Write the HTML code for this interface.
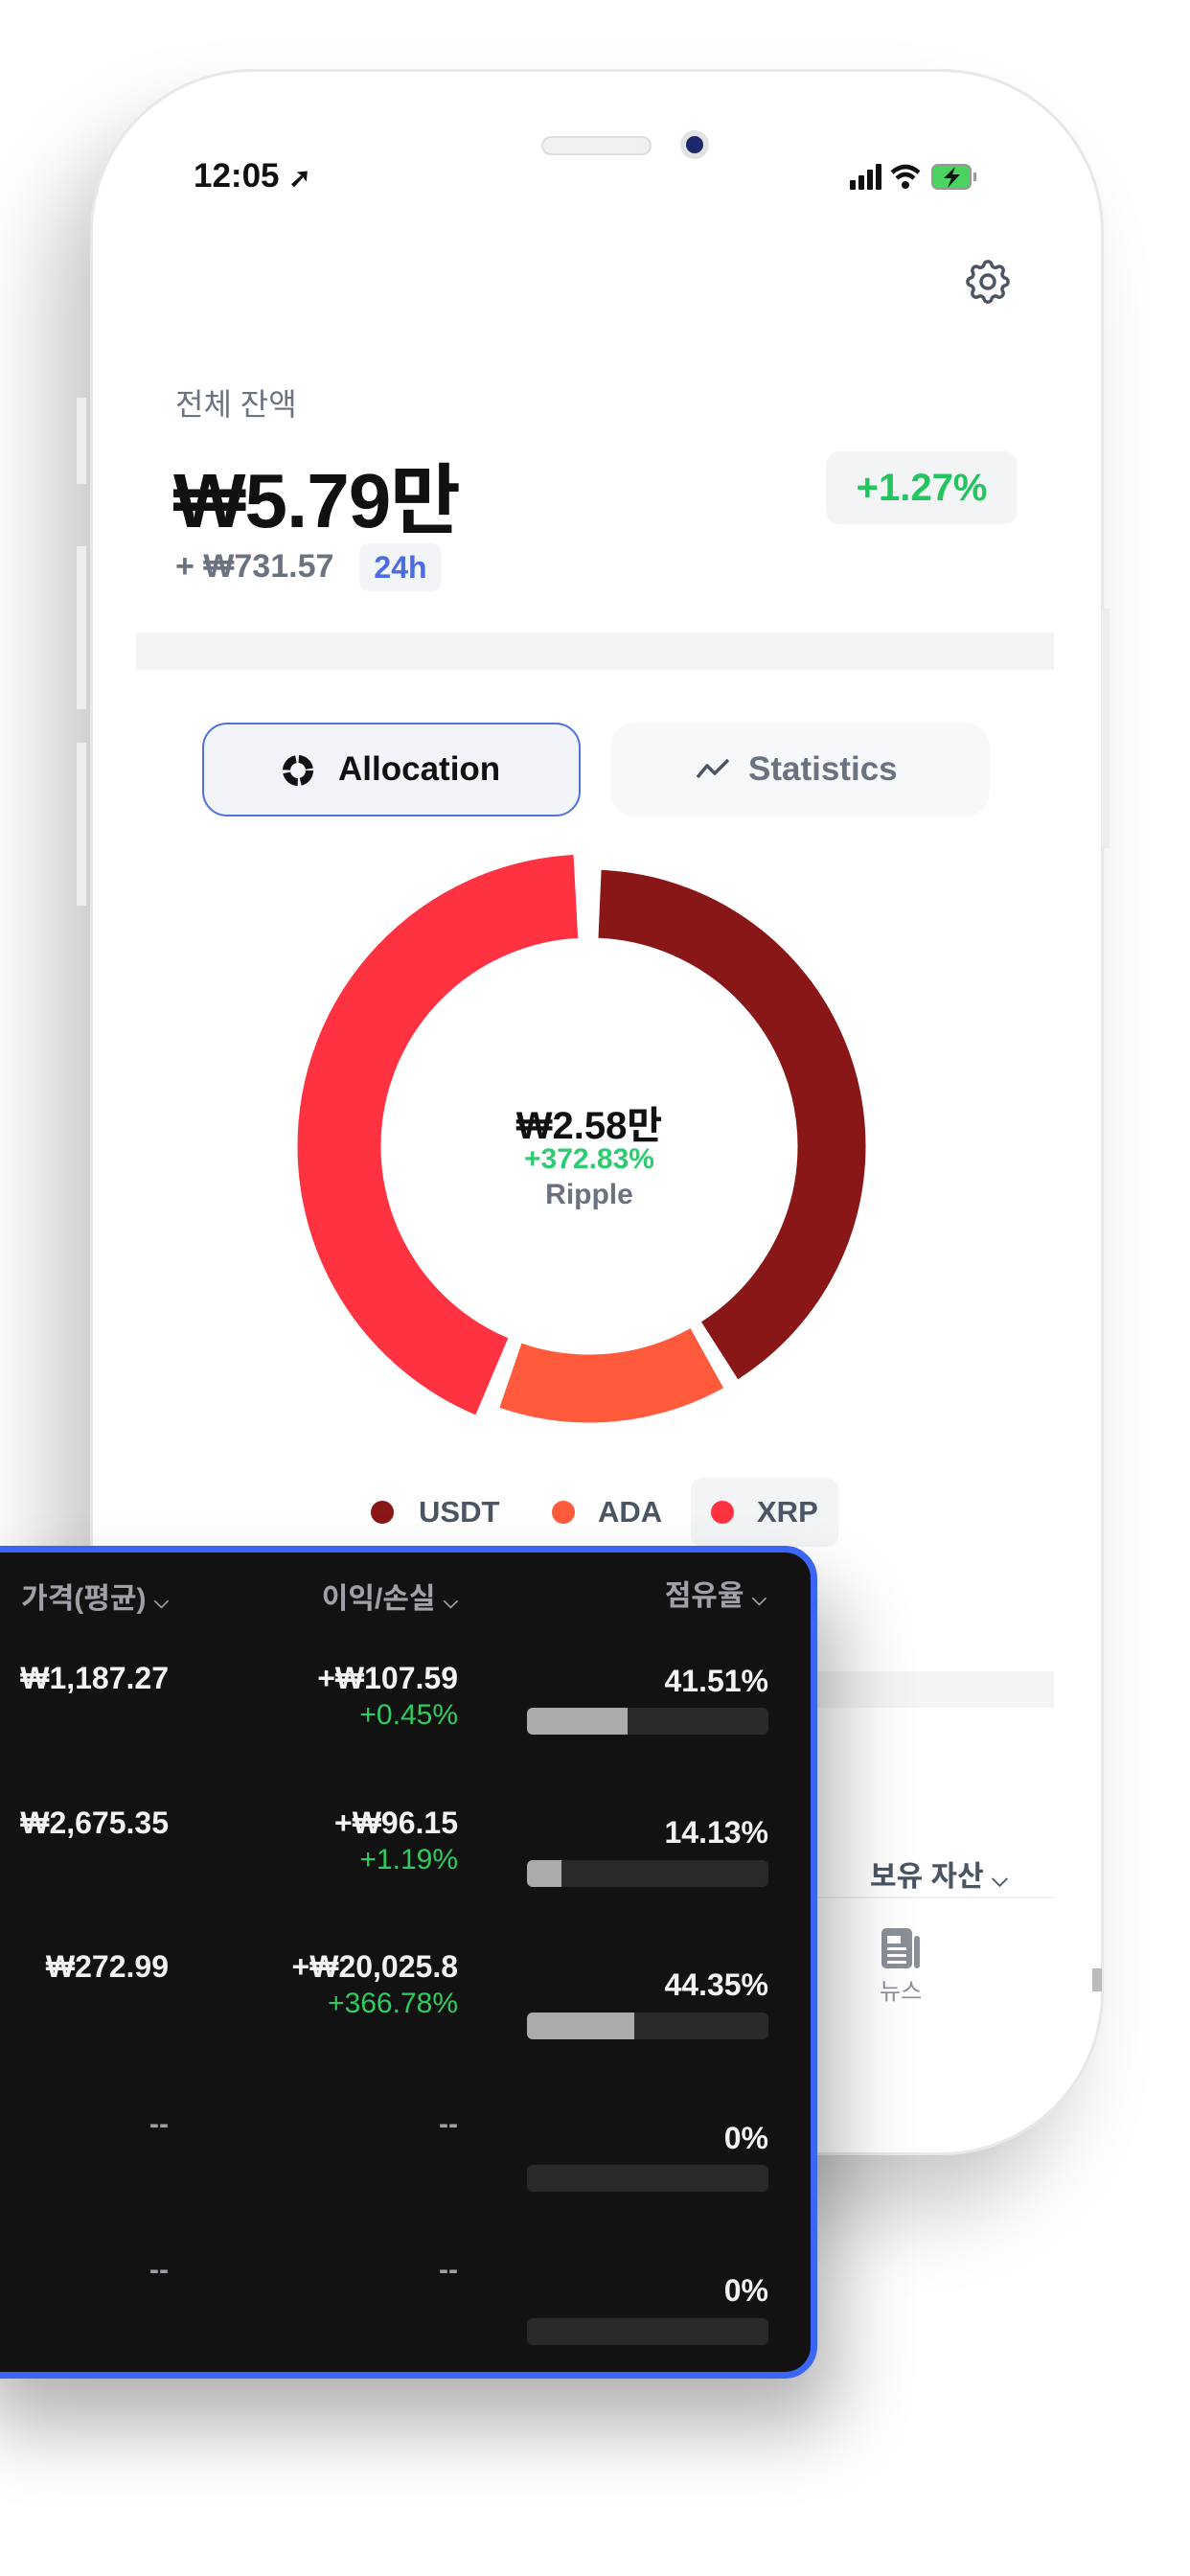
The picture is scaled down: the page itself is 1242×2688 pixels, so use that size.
<!DOCTYPE html>
<html><head><meta charset="utf-8"><style>
*{margin:0;padding:0;box-sizing:border-box}
body{width:1242px;height:2688px;background:#fff;position:relative;overflow:hidden;font-family:"Liberation Sans","Noto Sans CJK KR",sans-serif}
.a{position:absolute;white-space:nowrap}
.phone{position:absolute;left:94px;top:72px;width:1058px;height:2177px;border-radius:170px;background:#fff;border:3px solid #e8e8ea;box-shadow:-40px 60px 90px rgba(0,0,0,.22)}
.r{text-align:right}
.hd{color:#a0a0a8;font-size:30px;font-weight:600}
.w{color:#f2f2f2;font-size:32px;font-weight:600}
.g{color:#2ecc5e;font-size:30px}
.bar{position:absolute;left:550px;width:252px;height:28px;background:#2a2a2c;border-radius:6px;overflow:hidden}
.bar i{display:block;height:100%;background:#ababab}
</style></head><body>
<div class="phone"></div>
<div class="a" style="left:80px;top:415px;width:10px;height:90px;background:#eee"></div>
<div class="a" style="left:80px;top:570px;width:10px;height:170px;background:#eee"></div>
<div class="a" style="left:80px;top:775px;width:10px;height:170px;background:#eee"></div>
<div class="a" style="left:1150px;top:635px;width:8px;height:250px;background:#eee"></div>

<div class="a" style="left:202px;top:164px;font-size:35px;font-weight:600;color:#111">12:05 <span style="font-size:28px">➚</span></div>
<div class="a" style="left:565px;top:142px;width:115px;height:20px;border-radius:10px;background:#f0f0f0;border:2px solid #ddd"></div>
<div class="a" style="left:710px;top:136px;width:30px;height:30px;border-radius:50%;background:#1b2a6b;border:6px solid #e3e3e6"></div>
<svg class="a" style="left:885px;top:168px" width="175" height="34" viewBox="0 0 175 34">
<rect x="2" y="20" width="6" height="10" rx="1" fill="#111"/><rect x="11" y="15" width="6" height="15" rx="1" fill="#111"/><rect x="20" y="9" width="6" height="21" rx="1" fill="#111"/><rect x="29" y="3" width="6" height="27" rx="1" fill="#111"/>
<path d="M46 12 Q60 0 74 12" stroke="#111" stroke-width="4.5" fill="none"/><path d="M51 18 Q60 10 69 18" stroke="#111" stroke-width="4.5" fill="none"/><circle cx="60" cy="25" r="4" fill="#111"/>
<rect x="88" y="4" width="40" height="25" rx="6" fill="#4bd35f" stroke="#999" stroke-width="2"/><rect x="131" y="12" width="3" height="9" fill="#999"/>
<path d="M112 6 L100 18 H108 L104 28 L117 14 H109 Z" fill="#111"/>
</svg>
<svg class="a" style="left:1003px;top:266px" width="56" height="56" viewBox="0 0 24 24" fill="none" stroke="#4b5563" stroke-width="1.5"><path d="M10.3 4.3c.4-1.8 3-1.8 3.4 0a1.7 1.7 0 0 0 2.6 1.1c1.5-.9 3.3.8 2.4 2.4a1.7 1.7 0 0 0 1 2.5c1.8.4 1.8 3 0 3.4a1.7 1.7 0 0 0-1 2.6c.9 1.5-.9 3.3-2.4 2.4a1.7 1.7 0 0 0-2.6 1c-.4 1.8-3 1.8-3.4 0a1.7 1.7 0 0 0-2.6-1c-1.5.9-3.3-.9-2.4-2.4a1.7 1.7 0 0 0-1-2.6c-1.8-.4-1.8-3 0-3.4a1.7 1.7 0 0 0 1-2.5c-.9-1.6.9-3.3 2.4-2.4 1 .6 2.300.1 2.6-1.1z"/><circle cx="12" cy="12" r="3"/></svg>

<div class="a" style="left:183px;top:397px;font-size:32px;color:#6b7280">전체 잔액</div>
<div class="a" style="left:181px;top:458px;font-size:80px;font-weight:700;color:#111;letter-spacing:-1px">₩5.79만</div>
<div class="a" style="left:862px;top:471px;width:200px;height:76px;border-radius:14px;background:#f3f4f6;color:#22c55e;font-size:40px;font-weight:600;text-align:center;line-height:76px">+1.27%</div>
<div class="a" style="left:183px;top:572px;font-size:34px;color:#6b7280;font-weight:600">+ ₩731.57</div>
<div class="a" style="left:375px;top:567px;width:86px;height:50px;border-radius:10px;background:#f3f4f8;color:#4a6ce0;font-size:32px;font-weight:600;text-align:center;line-height:50px">24h</div>
<div class="a" style="left:142px;top:660px;width:958px;height:39px;background:#f3f4f6"></div>

<div class="a" style="left:211px;top:754px;width:395px;height:98px;border-radius:26px;border:2px solid #4f73db;background:#f3f4f9;font-size:35px;font-weight:600;color:#111;line-height:94px;padding-left:140px">Allocation</div>
<svg class="a" style="left:294px;top:787px" width="34" height="34" viewBox="0 0 34 34"><circle cx="17" cy="17" r="12" fill="none" stroke="#111" stroke-width="8" stroke-dasharray="16 3"/></svg>
<div class="a" style="left:637px;top:754px;width:396px;height:98px;border-radius:26px;background:#f7f8fa;font-size:35px;font-weight:600;color:#6b7280;line-height:98px;padding-left:144px">Statistics</div>
<svg class="a" style="left:725px;top:787px" width="40" height="30" viewBox="0 0 40 30"><path d="M3 24 L13 12 L21 20 L35 6" stroke="#4b5563" stroke-width="3.5" fill="none" stroke-linejoin="round"/></svg>

<svg class="a" style="left:295px;top:876px" width="640" height="640" viewBox="0 0 640 640">
<g transform="rotate(-90 320 320)">
<circle cx="320" cy="320" r="253" pathLength="360" fill="none" stroke="#8a1717" stroke-width="71" stroke-dasharray="145 215" stroke-dashoffset="-2.5"/>
<circle cx="320" cy="320" r="253" pathLength="360" fill="none" stroke="#ff5a3c" stroke-width="71" stroke-dasharray="48 312" stroke-dashoffset="-151"/>
<circle cx="320" cy="320" r="261" pathLength="360" fill="none" stroke="#ff3241" stroke-width="87" stroke-dasharray="154 206" stroke-dashoffset="-203"/>
</g></svg>
<div class="a" style="left:415px;top:1142px;width:400px;text-align:center;font-size:40px;font-weight:600;color:#111">₩2.58만</div>
<div class="a" style="left:415px;top:1193px;width:400px;text-align:center;font-size:30px;font-weight:600;color:#2ecc71">+372.83%</div>
<div class="a" style="left:415px;top:1230px;width:400px;text-align:center;font-size:30px;font-weight:600;color:#6b7280">Ripple</div>

<div class="a" style="left:721px;top:1542px;width:154px;height:72px;border-radius:12px;background:#f3f4f6"></div>
<div class="a" style="left:387px;top:1566px;width:24px;height:24px;border-radius:50%;background:#8a1717"></div>
<div class="a" style="left:437px;top:1560px;font-size:31px;font-weight:600;color:#4b5563">USDT</div>
<div class="a" style="left:576px;top:1566px;width:24px;height:24px;border-radius:50%;background:#ff5a3c"></div>
<div class="a" style="left:624px;top:1560px;font-size:31px;font-weight:600;color:#4b5563">ADA</div>
<div class="a" style="left:742px;top:1566px;width:24px;height:24px;border-radius:50%;background:#ff3241"></div>
<div class="a" style="left:790px;top:1560px;font-size:31px;font-weight:600;color:#4b5563">XRP</div>

<div class="a" style="left:850px;top:1744px;width:250px;height:38px;background:#f3f4f6"></div>
<div class="a" style="left:908px;top:1933px;font-size:30px;color:#4b5563;font-weight:600">보유 자산 <span style="font-size:22px">⌵</span></div>
<div class="a" style="left:850px;top:1979px;width:250px;height:2px;background:#eef0f2"></div>
<svg class="a" style="left:918px;top:2010px" width="44" height="46" viewBox="0 0 44 46"><rect x="2" y="2" width="32" height="42" rx="5" fill="#8a8f98"/><rect x="36" y="10" width="6" height="34" rx="3" fill="#8a8f98"/><rect x="8" y="10" width="14" height="8" fill="#fff"/><rect x="8" y="22" width="20" height="3" fill="#fff"/><rect x="8" y="29" width="20" height="3" fill="#fff"/><rect x="8" y="36" width="20" height="3" fill="#fff"/></svg>
<div class="a" style="left:918px;top:2058px;font-size:24px;color:#8a8f98">뉴스</div>
<div class="a" style="left:1140px;top:2054px;width:10px;height:24px;background:#bbb"></div>

<div class="a" style="left:-40px;top:1613px;width:893px;height:869px;border-radius:34px;background:#121212;border:7px solid #3b66f5;box-shadow:20px 50px 80px rgba(0,0,0,.3)"></div>
<div class="a hd r" style="left:-40px;width:216px;top:1643px">가격(평균) <span style="font-size:20px">⌵</span></div>
<div class="a hd r" style="left:300px;width:178px;top:1643px">이익/손실 <span style="font-size:20px">⌵</span></div>
<div class="a hd r" style="left:620px;width:180px;top:1640px">점유율 <span style="font-size:20px">⌵</span></div>

<div class="a w r" style="left:-40px;width:216px;top:1733px">₩1,187.27</div>
<div class="a w r" style="left:250px;width:228px;top:1733px">+₩107.59</div>
<div class="a g r" style="left:250px;width:228px;top:1773px">+0.45%</div>
<div class="a w r" style="left:600px;width:202px;top:1736px">41.51%</div>
<div class="bar" style="top:1782px"><i style="width:41.5%"></i></div>

<div class="a w r" style="left:-40px;width:216px;top:1884px">₩2,675.35</div>
<div class="a w r" style="left:250px;width:228px;top:1884px">+₩96.15</div>
<div class="a g r" style="left:250px;width:228px;top:1924px">+1.19%</div>
<div class="a w r" style="left:600px;width:202px;top:1894px">14.13%</div>
<div class="bar" style="top:1941px"><i style="width:14.1%"></i></div>

<div class="a w r" style="left:-40px;width:216px;top:2034px">₩272.99</div>
<div class="a w r" style="left:250px;width:228px;top:2034px">+₩20,025.8</div>
<div class="a g r" style="left:250px;width:228px;top:2074px">+366.78%</div>
<div class="a w r" style="left:600px;width:202px;top:2053px">44.35%</div>
<div class="bar" style="top:2100px"><i style="width:44.4%"></i></div>

<div class="a hd r" style="left:0;width:176px;top:2200px">--</div>
<div class="a hd r" style="left:250px;width:228px;top:2200px">--</div>
<div class="a w r" style="left:600px;width:202px;top:2213px">0%</div>
<div class="bar" style="top:2259px"></div>

<div class="a hd r" style="left:0;width:176px;top:2352px">--</div>
<div class="a hd r" style="left:250px;width:228px;top:2352px">--</div>
<div class="a w r" style="left:600px;width:202px;top:2372px">0%</div>
<div class="bar" style="top:2419px"></div>
</body></html>
